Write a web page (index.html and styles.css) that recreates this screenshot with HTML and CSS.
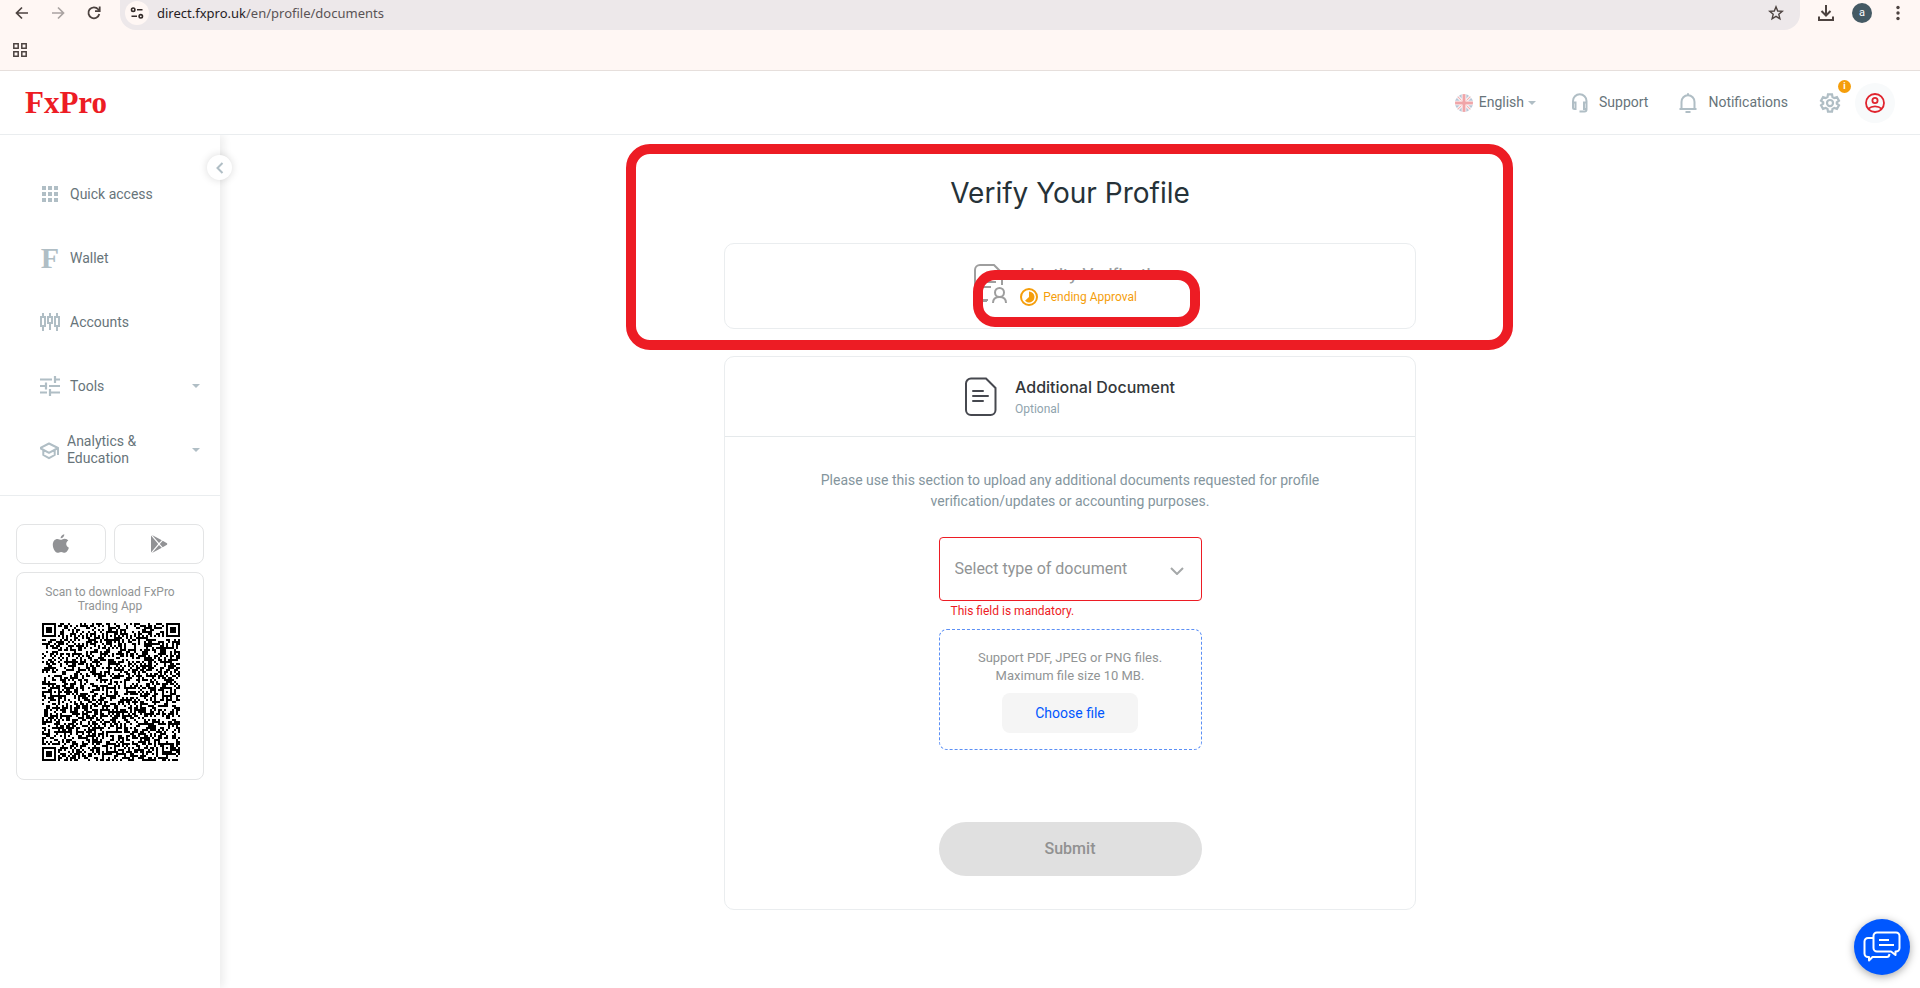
FILE: index.html
```html
<!DOCTYPE html>
<html lang="en">
<head>
<meta charset="utf-8">
<title>FxPro Direct - Documents</title>
<link rel="stylesheet" href="styles.css">
</head>
<body>
<div class="browser">
  <div class="browser-row">
    <div class="browser-nav">
      <button class="icon-btn" aria-label="Back"><svg width="14" height="14" viewBox="0 0 14 14" fill="none" stroke="#4d4340" stroke-width="1.7"><path d="M13 7H2M7 1.5 1.5 7 7 12.500"/></svg></button>
      <button class="icon-btn" aria-label="Forward"><svg width="14" height="14" viewBox="0 0 14 14" fill="none" stroke="#aaa3a1" stroke-width="1.7"><path d="M1 7h11M7 1.500 12.500 7 7 12.500"/></svg></button>
      <button class="icon-btn" aria-label="Reload"><svg width="14" height="14" viewBox="0 0 14 14" fill="none" stroke="#4d4340" stroke-width="1.8"><path d="M12.300 8A5.500 5.500 0 1 1 11.200 3.300L12.500 4.700"/><path d="M12.700.5V5.100H8"/></svg></button>
    </div>
    <div class="omnibox">
      <span class="site-info"><svg width="14" height="12" viewBox="0 0 14 12" fill="none" stroke="#332b29" stroke-width="1.6"><circle cx="3.200" cy="2.700" r="1.700"/><path d="M7 2.700h5.500M1.500 9.300H7"/><circle cx="10.800" cy="9.300" r="1.700"/></svg></span>
      <span class="url"><span class="url-host">direct.fxpro.uk</span>/en/profile/documents</span>
      <button class="icon-btn" aria-label="Bookmark"><svg width="16" height="16" viewBox="0 0 16 16" fill="none" stroke="#4d4340" stroke-width="1.4"><path d="M8 1.800 9.700 6l4.600.3-3.500 3 1.100 4.500L8 11.400l-3.900 2.400 1.100-4.500-3.500-3L6.300 6Z"/></svg></button>
    </div>
    <div class="browser-tools">
      <button class="icon-btn" aria-label="Downloads"><svg width="18" height="18" viewBox="0 0 18 18" fill="none" stroke="#4d4340" stroke-width="2"><path d="M9 1v10M4.500 7 9 11.500 13.500 7M2 12.500V16h14v-3.500"/></svg></button>
      <span class="avatar">a</span>
      <button class="icon-btn" aria-label="Menu"><svg width="14" height="16" viewBox="0 0 14 16" fill="#4d4340"><circle cx="7" cy="2.500" r="1.700"/><circle cx="7" cy="8" r="1.700"/><circle cx="7" cy="13.500" r="1.700"/></svg></button>
    </div>
  </div>
  <div class="bookmarks">
    <button class="icon-btn" aria-label="Apps"><svg width="14" height="14" viewBox="0 0 14 14" fill="none" stroke="#4d4340" stroke-width="1.500"><path d="M.8.800h4.400v4.400H.8zM8.800.800h4.400v4.400H8.800zM.8 8.800h4.400v4.400H.8zM8.800 8.800h4.400v4.400H8.800z"/></svg></button>
  </div>
</div>

<header class="topbar">
  <a class="logo" href="#">FxPro</a>
  <nav class="topnav">
    <button class="top-item lang">
      <svg width="18" height="18" viewBox="0 0 18 18"><defs><clipPath id="fc"><circle cx="9" cy="9" r="9"/></clipPath></defs><g clip-path="url(#fc)"><path fill="#b9c6d6" d="M0 0h18v18H0z"/><path stroke="#fff" stroke-width="3" d="m0 0 18 18M18 0 0 18"/><path stroke="#f2b3b5" stroke-width="1.200" d="m0 0 18 18M18 0 0 18"/><path stroke="#fff" stroke-width="4.600" d="M9 0v18M0 9h18"/><path stroke="#f0a5a8" stroke-width="3" d="M9 0v18M0 9h18"/></g></svg>
      <span>English</span>
      <svg class="caret" width="8" height="4" viewBox="0 0 8 4"><path fill="#b0bec5" d="M0 0h8L4 4z"/></svg>
    </button>
    <a class="top-item" href="#"><svg width="18" height="20" viewBox="0 0 18 20" fill="none" stroke="#b0bec5" stroke-width="2"><path d="M2 12V8a6.500 6.500 0 0 1 13.500 0v8.500q0 2-2 2H8.500"/><path d="M2 9.500h2.500v6.500H3.500A1.500 1.500 0 0 1 2 14.500zM15.500 9.500H13v6.500h2.500"/></svg><span>Support</span></a>
    <a class="top-item" href="#"><svg width="20" height="20" viewBox="0 0 20 20" fill="none" stroke="#b0bec5" stroke-width="2"><path d="M1.500 16h17M3.500 16V9A6.500 6.500 0 0 1 10 2.300 6.500 6.500 0 0 1 16.500 9v7"/><path d="M9 1.200h2M7.500 19h5"/></svg><span>Notifications</span></a>
    <button class="gear" aria-label="Settings">
      <svg width="22" height="22" viewBox="0 0 24 24" fill="none" stroke="#b0bec5" stroke-width="2.400"><path d="M9.800 2.500h4.400l.5 3 2 1.200 2.900-1.100 2.200 3.800-2.400 1.900v1.400l2.400 1.900-2.200 3.800-2.900-1.100-2 1.200-.5 3H9.800l-.5-3-2-1.200-2.900 1.100-2.200-3.800 2.400-1.900v-1.400L2.200 9.400l2.200-3.800 2.900 1.100 2-1.200z"/><circle cx="12" cy="12" r="3.300"/></svg>
      <span class="badge">i</span>
    </button>
    <button class="profile" aria-label="Profile"><svg width="20" height="20" viewBox="0 0 20 20" fill="none" stroke="#e0242e" stroke-width="1.800"><circle cx="10" cy="10" r="9"/><circle cx="10" cy="7.500" r="2.600"/><path d="M3.500 15.600Q6 13.300 10 13.300t6.500 2.300"/></svg></button>
  </nav>
</header>

<div class="shell">
  <aside class="sidebar">
    <button class="collapse" aria-label="Collapse"><svg width="8" height="12" viewBox="0 0 8 12" fill="none" stroke="#b0bec5" stroke-width="2"><path d="M6.500 1 1.500 6l5 5"/></svg></button>
    <nav class="menu">
      <a class="menu-item" href="#"><svg width="20" height="20" viewBox="0 0 20 20" fill="#b0bec5"><path d="M2 2h4v4H2zM8 2h4v4H8zM14 2h4v4h-4zM2 8h4v4H2zM8 8h4v4H8zM14 8h4v4h-4zM2 14h4v4H2zM8 14h4v4H8zM14 14h4v4h-4z"/></svg><span>Quick access</span></a>
      <a class="menu-item" href="#"><span class="f-icon" aria-hidden="true">F</span><span>Wallet</span></a>
      <a class="menu-item" href="#"><svg width="20" height="20" viewBox="0 0 20 20" fill="none" stroke="#b0bec5" stroke-width="2"><path d="M3 1v4M3 14v5M1 5h4v9H1zM10 1v4M10 11v7M8 5h4v6H8zM17 1v4M17 14v5M15 5h4v9h-4z"/></svg><span>Accounts</span></a>
      <a class="menu-item" href="#"><svg width="20" height="20" viewBox="0 0 20 20" fill="none" stroke="#b0bec5" stroke-width="2.200"><path d="M0 3.500h12M15 0v7M15 3.500h5M0 10h6M6 6.500v7M9 10h11M0 16.500h7M10 13v7M10 16.500h10"/></svg><span>Tools</span><svg class="caret" width="8" height="4" viewBox="0 0 8 4"><path fill="#b0bec5" d="M0 0h8L4 4z"/></svg></a>
      <a class="menu-item wide" href="#"><svg width="20" height="20" viewBox="0 0 20 20" fill="none" stroke="#b0bec5" stroke-width="2" stroke-linejoin="round"><path d="M0 8 9 3.500 18 8l-9 4.800zM3.300 10v5l5.700 3.200 5.700-3.200v-5M18 8v7"/></svg><span>Analytics &amp;<br>Education</span><svg class="caret" width="8" height="4" viewBox="0 0 8 4"><path fill="#b0bec5" d="M0 0h8L4 4z"/></svg></a>
    </nav>
    <div class="apps">
      <a class="store" href="#" aria-label="App Store"><svg width="18" height="20" viewBox="0 0 18 20" fill="#919295"><path d="M12.300.3c.2 2-1.500 4-3.700 4C8.500 2.500 10.200.6 12.300.3zM9 5.800c.9 0 2-1.100 3.800-1.100 1.500 0 2.800.8 3.500 1.900-3.100 1.900-2.500 5.900.6 7.100-.7 2.100-2.300 5-4.200 5-1.400 0-1.900-.8-3.600-.8s-2.200.8-3.600.8C3 18.700.8 14.300.8 10.800.8 7 3.100 4.900 5.400 4.900 7 4.900 8.100 5.800 9 5.800z"/></svg></a>
      <a class="store" href="#" aria-label="Google Play"><svg width="18" height="20" viewBox="0 0 18 20" fill="#919295"><path d="M1 1.600v16.800L8.200 10zM2 .9l7 8 2.800-2.700zM2 19.100l7-8 2.800 2.700zM12.700 6.700 9.800 10l2.900 3.300L17 10.700q.6-.7 0-1.400z"/></svg></a>
      <div class="qr-card">
        <p class="qr-text">Scan to download FxPro Trading App</p>
        <svg class="qr" viewBox="0 0 69 69" shape-rendering="crispEdges" role="img" aria-label="QR code"><path id="qr-modules" fill="#000"/></svg>
      </div>
    </div>
  </aside>

  <main class="content">
    <div class="column">
      <div class="mark mark-outer"></div>
      <div class="mark mark-inner"></div>
      <h1 class="title">Verify Your Profile</h1>
      <section class="card card-head identity">
        <svg width="34" height="40" viewBox="0 0 34 40" fill="none" stroke="#9e9e9e" stroke-width="2"><path d="M13 37H6a5 5 0 0 1-5-5V6a5 5 0 0 1 5-5h14l8 8v12"/><path d="M8 13h8M8 18h14M8 23h9M8 36h6"/><circle cx="25.500" cy="28.500" r="4.500"/><path d="M19 39q0-6 6.500-6t6.500 6"/></svg>
        <div><h2 class="card-title">Identity Verification</h2>
        <p class="pending"><svg width="18" height="18" viewBox="0 0 18 18"><circle cx="9" cy="9" r="8" fill="none" stroke="#f59e0b" stroke-width="2"/><path fill="#f59e0b" d="M9 3.500a5.500 5.500 0 1 1-4 9.300L9 9z"/></svg>Pending Approval</p></div>
      </section>
      <section class="card">
        <div class="card-head additional">
          <svg width="32" height="40" viewBox="0 0 32 40" fill="none" stroke="#46484f" stroke-width="2"><path d="M6 1.500h15L30.500 11v22a5 5 0 0 1-5 5H6a5 5 0 0 1-5-5V6.500a5 5 0 0 1 5-5z"/><path stroke-linecap="round" d="M8 14h10M8 19h15M8 24h10"/></svg>
          <div><h2 class="card-title">Additional Document</h2><p class="optional">Optional</p></div>
        </div>
        <form class="form">
          <p class="intro">Please use this section to upload any additional documents requested for profile verification/updates or accounting purposes.</p>
          <div class="select-wrap">
            <select class="select" aria-label="Select type of document" aria-describedby="type-error"><option>Select type of document</option></select>
            <svg class="chevron" width="14" height="8" viewBox="0 0 14 8" fill="none" stroke="#a5a8a9" stroke-width="2"><path d="m1 1 6 6 6-6"/></svg>
          </div>
          <p class="error" id="type-error">This field is mandatory.</p>
          <div class="drop">
            <p>Support PDF, JPEG or PNG files.<br>Maximum file size 10 MB.</p>
            <button type="button" class="choose">Choose file</button>
          </div>
          <button type="button" class="submit" disabled>Submit</button>
        </form>
      </section>
    </div>
  </main>
</div>
<button class="chat" aria-label="Chat"><svg width="38" height="32" viewBox="0 0 38 32" fill="none" stroke="#fff" stroke-width="2" stroke-linejoin="round"><path d="M10 7H5a3.500 3.500 0 0 0-3.500 3.500v12A3.500 3.500 0 0 0 5 26h1v3.500L9.500 26H24q2 0 2.500-3"/><path d="M14 1.500h19A3.500 3.500 0 0 1 36.500 5v12a3.500 3.500 0 0 1-3.500 3.500h-.5V24L28 20.500H14a3.500 3.500 0 0 1-3.500-3.500V5A3.500 3.500 0 0 1 14 1.500zM16 9h10M16 14h15"/></svg></button>
<script src="qr.js"></script>
</body>
</html>
```
FILE: styles.css
```css
* { box-sizing: border-box; }
body { margin: 0; min-height: 100vh; display: flex; flex-direction: column; background: #fff; color: #67747a; font: 14px/20px Roboto, sans-serif; }
h1, h2, p { margin: 0; font-weight: 400; }
button { border: 0; padding: 0; background: none; font: inherit; color: inherit; }
a { color: inherit; text-decoration: none; }
svg { display: block; flex: none; }

.browser { height: 71px; background: #fff7f4; border-bottom: 1px solid #e6dfdc; }
.browser-row { display: flex; height: 30px; padding-left: 15px; }
.browser-nav { display: flex; align-items: center; gap: 22px; width: 105px; height: 26px; }
.omnibox { flex: 1; display: flex; align-items: center; height: 30px; padding: 0 16px 4px 5px; border-radius: 0 0 16px 16px; background: #ede8ea; }
.site-info { display: flex; align-items: center; justify-content: center; width: 24px; height: 24px; border-radius: 50%; background: #fff7f4; }
.url { flex: 1; padding-left: 8px; font: 13px/20px "Noto Sans", sans-serif; color: #5a5355; }
.url-host { color: #26201f; }
.browser-tools { display: flex; align-items: center; gap: 17px; width: 120px; height: 26px; padding-left: 17px; }
.browser-tools .icon-btn:last-child { margin-left: 2px; }
.avatar { width: 20px; height: 20px; border-radius: 50%; background: #455a64; color: #fff; font-size: 11px; text-align: center; }
.bookmarks { padding: 12px 13px; }

.topbar { display: flex; align-items: center; justify-content: space-between; height: 64px; padding: 0 25px; border-bottom: 1px solid #eaedef; }
.logo { font: 700 31px/40px "Liberation Serif", serif; color: #ed1c24; }
.topnav { display: flex; align-items: center; gap: 30px; }
.top-item { display: flex; align-items: center; gap: 10px; }
.top-item span { padding-bottom: 2px; }
.lang { gap: 6px; margin-right: 5px; }
.lang .caret { margin-left: -2px; }
.gear { position: relative; margin-left: 1px; }
.badge { position: absolute; top: -12px; right: -10px; width: 13px; height: 13px; border-radius: 50%; background: #f59e0b; color: #fff; font: 700 9px/13px Roboto, sans-serif; }
.profile { display: flex; align-items: center; justify-content: center; width: 40px; height: 40px; margin-left: -16px; border-radius: 50%; background: #f8fafb; }

.shell { flex: 1; display: flex; }
.sidebar { position: relative; flex: none; width: 220px; box-shadow: 4px 0 8px rgba(0, 0, 0, .07); clip-path: inset(0 -20px 0 0); }
.collapse { position: absolute; top: 20px; right: -12px; display: flex; align-items: center; justify-content: center; width: 25px; height: 25px; border-radius: 50%; background: #fff; box-shadow: 0 0 8px rgba(0, 0, 0, .15); }
.menu { padding: 27px 20px 13px 40px; border-bottom: 1px solid #eaedef; }
.menu-item { display: flex; align-items: center; gap: 10px; height: 64px; line-height: 17px; }
.menu-item.wide { gap: 7px; }
.menu-item .caret { margin-left: auto; }
.f-icon { width: 20px; text-align: center; font: 700 30px/30px "Liberation Serif", serif; color: #b0bec5; }
.apps { display: grid; grid-template-columns: 1fr 1fr; gap: 8px; padding: 28px 16px; }
.store { display: flex; align-items: center; justify-content: center; height: 40px; border: 1px solid #e3e4e5; border-radius: 8px; }
.qr-card { grid-column: span 2; padding: 12px 25px 18px; border: 1px solid #e3e4e5; border-radius: 8px; }
.qr-text { font-size: 12px; line-height: 14px; text-align: center; color: #919495; }
.qr { width: 138px; height: 138px; margin-top: 10px; }

.content { flex: 1; padding: 0 24px; }
.column { position: relative; max-width: 692px; margin: 0 auto; }
.title { padding: 38px 0 30px; font: 28px/40px Inter, sans-serif; text-align: center; color: #263238; }
.card { margin-bottom: 27px; border: 1px solid #eaedef; border-radius: 10px; }
.card-head { display: flex; justify-content: center; }
.identity { height: 86px; gap: 12px; padding: 20px 0 0 4px; }
.identity .card-title { color: #9a9d9f; }
.card-title { margin-bottom: 2px; font: 500 16px/20px Inter, sans-serif; color: #33373a; }
.pending { display: flex; align-items: center; gap: 5px; margin-top: 4px; font-size: 12px; line-height: 18px; color: #f59e0b; }
.additional { height: 80px; gap: 18px; padding-top: 20px; border-bottom: 1px solid #e5e9eb; }
.optional { font-size: 12px; line-height: 20px; color: #90a4ae; }
.form { display: flex; flex-direction: column; align-items: center; padding: 33px 24px 33px; }
.intro { max-width: 510px; line-height: 21px; text-align: center; color: #84959d; }
.select-wrap { display: grid; align-items: center; width: 263px; margin-top: 25px; }
.select { grid-area: 1 / 1; appearance: none; height: 64px; padding: 0 15px; border: 1px solid #ed1c24; border-radius: 4px; background: #fff; color: #919495; font: 16px/24px Roboto, sans-serif; }
.chevron { grid-area: 1 / 1; justify-self: end; margin: 4px 18px 0 0; pointer-events: none; }
.error { width: 263px; padding-left: 12px; font-size: 12px; line-height: 20px; color: #ed1c24; }
.drop { display: flex; flex-direction: column; align-items: center; gap: 8px; width: 263px; margin-top: 8px; padding: 19px 0 16px; border: 1px dashed #5b8ff5; border-radius: 8px; text-align: center; font-size: 13px; line-height: 18px; color: #919495; }
.choose { width: 136px; height: 40px; border-radius: 8px; background: #f5f5f5; color: #0057ff; font-size: 14px; }
.submit { width: 263px; height: 54px; margin-top: 72px; border-radius: 27px; background: #e0e0e0; color: #919191; font-size: 16px; font-weight: 500; }

.mark { position: absolute; border: 10px solid #ed1c24; pointer-events: none; }
.mark-outer { top: 9px; left: -98px; right: -97px; height: 206px; border-radius: 24px; }
.mark-inner { top: 135px; left: 50%; width: 227px; height: 57px; margin-left: -97px; border-radius: 22px; }
.chat { position: fixed; right: 10px; bottom: 13px; display: flex; align-items: center; justify-content: center; width: 56px; height: 56px; border-radius: 50%; background: #0057ff; box-shadow: 0 2px 8px rgba(0, 0, 0, .35); }
```
FILE: qr.js
```js
// Builds the 69x69 module pattern: data area, timing lines, alignment and finder squares.
const n = 69;
const grid = Array.from({ length: n }, () => Array(n).fill(false));
let seed = 20240613;
for (let y = 0; y < n; y++) {
  for (let x = 0; x < n; x++) {
    seed = (Math.imul(seed, 1664525) + 1013904223) >>> 0;
    grid[y][x] = seed / 4294967296 < 0.5;
  }
}
for (let i = 0; i < n; i++) {
  grid[6][i] = i % 2 === 0;
  grid[i][6] = i % 2 === 0;
}
function square(cx, cy, radius, light) {
  for (let dy = -radius; dy <= radius; dy++) {
    for (let dx = -radius; dx <= radius; dx++) {
      const x = cx + dx, y = cy + dy;
      if (x < 0 || y < 0 || x >= n || y >= n) continue;
      grid[y][x] = !light.includes(Math.max(Math.abs(dx), Math.abs(dy)));
    }
  }
}
[[34, 6], [6, 34], [34, 34], [62, 34], [34, 62], [62, 62]].forEach(([x, y]) => square(x, y, 2, [1]));
[[3, 3], [65, 3], [3, 65]].forEach(([x, y]) => square(x, y, 4, [2, 4]));
let d = "";
grid.forEach((row, y) => row.forEach((on, x) => { if (on) d += `M${x} ${y}h1v1h-1z`; }));
document.getElementById("qr-modules").setAttribute("d", d);
```
